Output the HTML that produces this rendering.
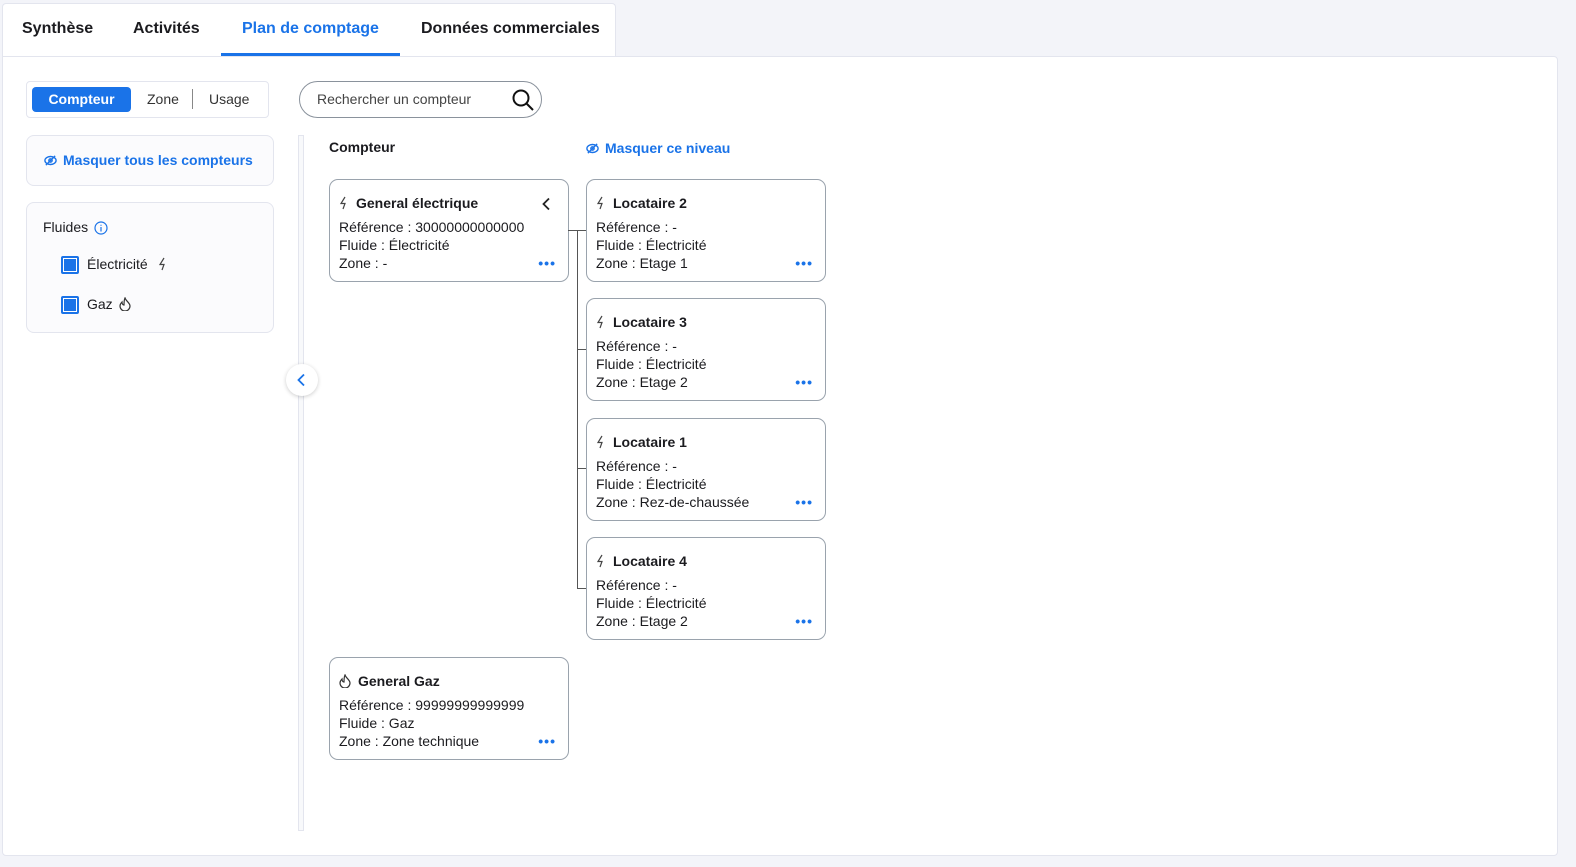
<!DOCTYPE html>
<html><head><meta charset="utf-8"><style>
*{box-sizing:border-box;margin:0;padding:0}
body{width:1576px;height:867px;background:#f3f4f9;font-family:"Liberation Sans",sans-serif;color:#1b1b1f;position:relative;overflow:hidden}
.abs{position:absolute}
.tabbar{left:2px;top:3px;width:614px;height:54px;background:#fff;border:1px solid #e3e5ee;border-bottom:none;border-radius:4px 4px 0 0}
.main{left:2px;top:56px;width:1556px;height:800px;background:#fff;border:1px solid #e3e5ee;border-radius:0 4px 4px 4px}
.tab{top:20px;font-size:16px;font-weight:bold}
.seg{left:26px;top:81px;width:243px;height:37px;border:1px solid #e3e5ee;border-radius:4px}
.box{border:1px solid #e3e5ee;border-radius:8px;background:#fbfbfd}
.blue{color:#1a73e8}
.card{width:240px;height:103px;border:1px solid #9aa3ad;border-radius:9px;background:#fff;padding:14px 9px 0 9px;font-size:14px;line-height:18px}
.card .t{font-weight:bold;display:flex;align-items:center;gap:7px;margin-bottom:6px;line-height:18px}
.dots{position:absolute;right:12px;bottom:14px;color:#1a73e8;font-weight:bold;letter-spacing:1px;font-size:14px;line-height:8px}
.ln{background:#555;position:absolute}
.cb{width:18px;height:18px;border:2px solid #1a73e8;background:#1a73e8;box-shadow:inset 0 0 0 1px #fff;border-radius:2px}
</style></head><body>
<svg width="0" height="0" style="position:absolute"><defs>
<symbol id="bolt" viewBox="0 0 10 14"><path d="M6 1L2 7.5h4L4 13" fill="none" stroke="#444" stroke-width="1.2"/></symbol>
</defs></svg>
<div class="abs tabbar"></div>
<div class="abs main"></div>
<div class="abs tab" style="left:22px">Synthèse</div>
<div class="abs tab" style="left:133px">Activités</div>
<div class="abs tab blue" style="left:242px">Plan de comptage</div>
<div class="abs" style="left:221px;top:53px;width:179px;height:3px;background:#1a73e8"></div>
<div class="abs tab" style="left:421px">Données commerciales</div>

<div class="abs seg"></div>
<div class="abs" style="left:32px;top:87px;width:99px;height:25px;background:#1a73e8;border-radius:4px;color:#fff;font-weight:bold;font-size:14px;text-align:center;line-height:25px">Compteur</div>
<div class="abs" style="left:147px;top:91px;font-size:14px;color:#333">Zone</div>
<div class="abs" style="left:192px;top:89px;width:1px;height:20px;background:#888"></div>
<div class="abs" style="left:209px;top:91px;font-size:14px;color:#333">Usage</div>

<div class="abs" style="left:299px;top:81px;width:243px;height:37px;border:1px solid #8a929c;border-radius:19px"></div>
<div class="abs" style="left:317px;top:91px;font-size:14px;color:#444">Rechercher un compteur</div>
<svg class="abs" style="left:511px;top:88px" width="24" height="24" viewBox="0 0 24 24" fill="none" stroke="#111" stroke-width="2"><circle cx="10" cy="10" r="7.5"/><path d="M15.5 15.5L22 22"/></svg>

<div class="abs box" style="left:26px;top:135px;width:248px;height:51px"></div>
<svg class="abs" style="left:44px;top:154px" width="13" height="13" viewBox="0 0 14 14" fill="none" stroke="#1a73e8" stroke-width="1.5"><ellipse cx="7" cy="7" rx="6" ry="4.3"/><circle cx="7" cy="7" r="1.8"/><path d="M2 12L12 2"/></svg>
<div class="abs blue" style="left:63px;top:152px;font-size:14px;font-weight:bold">Masquer tous les compteurs</div>

<div class="abs box" style="left:26px;top:202px;width:248px;height:131px"></div>
<div class="abs" style="left:43px;top:219px;font-size:14px">Fluides</div>
<svg class="abs" style="left:94px;top:221px" width="14" height="14" viewBox="0 0 14 14" fill="none" stroke="#1a73e8" stroke-width="1.2"><circle cx="7" cy="7" r="6"/><path d="M7 6v4.5M7 3.8v1"/></svg>
<div class="abs cb" style="left:61px;top:256px"></div>
<div class="abs" style="left:87px;top:256px;font-size:14px">Électricité</div>
<svg class="abs" style="left:158px;top:257px" width="10" height="14"><use href="#bolt"/></svg>
<div class="abs cb" style="left:61px;top:296px"></div>
<div class="abs" style="left:87px;top:296px;font-size:14px">Gaz</div>
<svg class="abs" style="left:119px;top:297px" width="12" height="14" viewBox="0 0 12 14" fill="none" stroke="#333" stroke-width="1.2"><path d="M6 1C7 4 11 6 11 9a5 5 0 0 1-10 0C1 7 3 5 3 5c0 2 1 3 2 3C5 5 5 3 6 1z"/></svg>

<div class="abs" style="left:298px;top:135px;width:6px;height:696px;border:1px solid #e3e5ee;background:#f8f9fb"></div>
<div class="abs" style="left:286px;top:364px;width:32px;height:32px;border-radius:50%;background:#fff;box-shadow:0 1px 4px rgba(0,0,0,.2)"></div>
<svg class="abs" style="left:295px;top:373px" width="14" height="14" viewBox="0 0 14 14" fill="none" stroke="#1a73e8" stroke-width="1.8"><path d="M9 1.5L3.5 7 9 12.5"/></svg>

<div class="abs" style="left:329px;top:139px;font-size:14px;font-weight:bold">Compteur</div>
<svg class="abs" style="left:586px;top:142px" width="13" height="13" viewBox="0 0 14 14" fill="none" stroke="#1a73e8" stroke-width="1.5"><ellipse cx="7" cy="7" rx="6" ry="4.3"/><circle cx="7" cy="7" r="1.8"/><path d="M2 12L12 2"/></svg>
<div class="abs blue" style="left:605px;top:140px;font-size:14px;font-weight:bold">Masquer ce niveau</div>

<div class="abs card" style="left:329px;top:179px"><div class="t"><svg width="10" height="14"><use href="#bolt"/></svg>General électrique</div>Référence : 30000000000000<br>Fluide : Électricité<br>Zone : -<span class="dots">•••</span>
<svg class="abs" style="right:17px;top:17px" width="10" height="14" viewBox="0 0 10 14" fill="none" stroke="#222" stroke-width="1.8"><path d="M8 1.5L2.5 7 8 12.5"/></svg></div>

<div class="ln" style="left:568px;top:230px;width:18px;height:1px"></div>
<div class="ln" style="left:577px;top:230px;width:1px;height:358px"></div>
<div class="ln" style="left:577px;top:349px;width:9px;height:1px"></div>
<div class="ln" style="left:577px;top:468px;width:9px;height:1px"></div>
<div class="ln" style="left:577px;top:588px;width:9px;height:1px"></div>

<div class="abs card" style="left:586px;top:179px"><div class="t"><svg width="10" height="14"><use href="#bolt"/></svg>Locataire 2</div>Référence : -<br>Fluide : Électricité<br>Zone : Etage 1<span class="dots">•••</span></div>
<div class="abs card" style="left:586px;top:298px"><div class="t"><svg width="10" height="14"><use href="#bolt"/></svg>Locataire 3</div>Référence : -<br>Fluide : Électricité<br>Zone : Etage 2<span class="dots">•••</span></div>
<div class="abs card" style="left:586px;top:418px"><div class="t"><svg width="10" height="14"><use href="#bolt"/></svg>Locataire 1</div>Référence : -<br>Fluide : Électricité<br>Zone : Rez-de-chaussée<span class="dots">•••</span></div>
<div class="abs card" style="left:586px;top:537px"><div class="t"><svg width="10" height="14"><use href="#bolt"/></svg>Locataire 4</div>Référence : -<br>Fluide : Électricité<br>Zone : Etage 2<span class="dots">•••</span></div>

<div class="abs card" style="left:329px;top:657px"><div class="t"><svg width="12" height="14" viewBox="0 0 12 14" fill="none" stroke="#333" stroke-width="1.2"><path d="M6 1C7 4 11 6 11 9a5 5 0 0 1-10 0C1 7 3 5 3 5c0 2 1 3 2 3C5 5 5 3 6 1z"/></svg>General Gaz</div>Référence : 99999999999999<br>Fluide : Gaz<br>Zone : Zone technique<span class="dots">•••</span></div>
</body></html>
